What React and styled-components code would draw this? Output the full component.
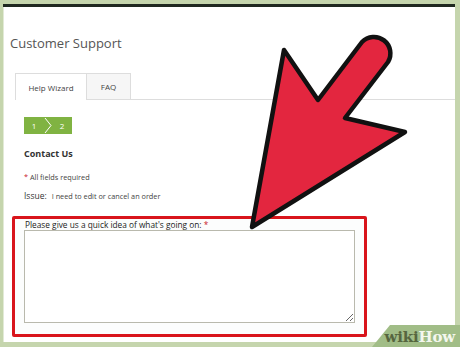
import React from 'react'
import styled, { createGlobalStyle } from 'styled-components'

const GlobalStyle = createGlobalStyle`
  html, body { margin: 0; padding: 0; }
  body { font-family: "Open Sans", "Liberation Sans", sans-serif; }
`

const Frame = styled.div`
  position: relative;
  width: 460px;
  height: 347px;
  box-sizing: border-box;
  padding: 4px 5px 5px 3px;
  background: #c5d5ad;
  display: flex;
  flex-direction: column;
  overflow: hidden;
`

const TopBar = styled.div`
  height: 3px;
  background: #1f2820;
`

const Page = styled.div`
  flex: 1;
  background: #fff;
  border-left: 1px solid #e2ead6;
  padding-left: 6px;
  display: flex;
  flex-direction: column;
`

const Title = styled.h1`
  margin: 27px 0 0;
  font-size: 13px;
  line-height: 18px;
  font-weight: 400;
  color: #555;
`

const TabRow = styled.div`
  margin: 21px 0 0 5px;
  display: flex;
  border-bottom: 1px solid #ddd;
`

const Tab = styled.div`
  width: ${p => p.w}px;
  box-sizing: border-box;
  display: flex;
  align-items: center;
  justify-content: center;
  font-size: 8px;
  color: #444;
  border: 1px solid #ddd;
  border-bottom: none;
  border-left-width: ${p => (p.active ? 1 : 0)}px;
  background: ${p => (p.active ? '#fff' : '#f6f6f6')};
  margin-bottom: ${p => (p.active ? -1 : 0)}px;
  height: ${p => (p.active ? 27 : 26)}px;
`

const Body = styled.div`
  margin-left: 14px;
  display: flex;
  flex-direction: column;
  align-items: flex-start;
`

const StepBox = styled.div`
  margin-top: 17px;
  width: 48px;
  height: 17px;
  background: #80b342;
  display: flex;
  align-items: center;
`

const StepNum = styled.span`
  width: 20px;
  text-align: center;
  color: #fff;
  font-size: 8px;
`

const Heading = styled.h2`
  margin: 14px 0 0;
  font-size: 9px;
  line-height: 12px;
  font-weight: 700;
  color: #333;
`

const Line = styled.div`
  margin-top: ${p => p.mt}px;
  font-size: 7.3px;
  line-height: 11px;
  color: #444;
`

const Req = styled.span`
  color: #c8202a;
`

const Key = styled.span`
  font-size: 8.5px;
  color: #333;
  margin-right: 5px;
`

const Highlight = styled.div`
  margin: 14px 0 0 2px;
  width: 355px;
  box-sizing: border-box;
  border: 3px solid #d9151c;
  border-radius: 2px;
  padding: 0 9px 11px 9px;
  background: #fcfdfd;
`

const FieldLabel = styled.label`
  display: block;
  margin-left: 1px;
  font-size: 8.3px;
  line-height: 11px;
  color: #222;
`

const Area = styled.textarea`
  display: block;
  width: 331px;
  height: 93px;
  box-sizing: border-box;
  border: 1px solid #b9b9ad;
  background: #fff;
  margin: 0;
`

const Brand = styled.div`
  position: absolute;
  right: 0;
  bottom: 0;
  width: 88px;
  height: 22px;
  background: #a1bd87;
  clip-path: polygon(18px 0, 100% 0, 100% 100%, 0 100%);
  display: flex;
  align-items: flex-end;
  justify-content: flex-end;
  padding-right: 5px;
  box-sizing: border-box;
  font-family: "DejaVu Serif", "Liberation Serif", serif;
  font-weight: 700;
  font-size: 15px;
  line-height: 19px;
  letter-spacing: -0.2px;
`

const Wiki = styled.span`
  color: #56663f;
`

const How = styled.span`
  color: #f4f7ee;
`

const Overlay = styled.svg`
  position: absolute;
  left: 0;
  top: 0;
  pointer-events: none;
`

export default function App() {
  return (
    <>
      <GlobalStyle />
      <Frame>
        <TopBar />
        <Page>
          <Title>Customer Support</Title>
          <TabRow>
            <Tab active w={72}>Help Wizard</Tab>
            <Tab w={44}>FAQ</Tab>
          </TabRow>
          <Body>
            <StepBox>
              <StepNum>1</StepNum>
              <svg width="8" height="17" viewBox="0 0 8 17">
                <polyline points="1,1 7,8.5 1,16" fill="none" stroke="#fff" strokeWidth="1" />
              </svg>
              <StepNum>2</StepNum>
            </StepBox>
            <Heading>Contact Us</Heading>
            <Line mt={12}>
              <Req>*</Req> All fields required
            </Line>
            <Line mt={7}>
              <Key>Issue:</Key>I need to edit or cancel an order
            </Line>
          </Body>
          <Highlight>
            <FieldLabel>
              Please give us a quick idea of what's going on: <Req>*</Req>
            </FieldLabel>
            <Area />
          </Highlight>
        </Page>
        <Brand>
          <Wiki>wiki</Wiki>
          <How>How</How>
        </Brand>
        <Overlay width="460" height="347" viewBox="0 0 460 347">
          <path
            d="M252 227 L284 50 L318 100 L362 42 A16.5 16.5 0 0 1 388 62 L345 118 L405 132 Z"
            fill="#e3263f"
            stroke="#111"
            strokeWidth="4.5"
            strokeLinejoin="round"
          />
        </Overlay>
      </Frame>
    </>
  )
}
